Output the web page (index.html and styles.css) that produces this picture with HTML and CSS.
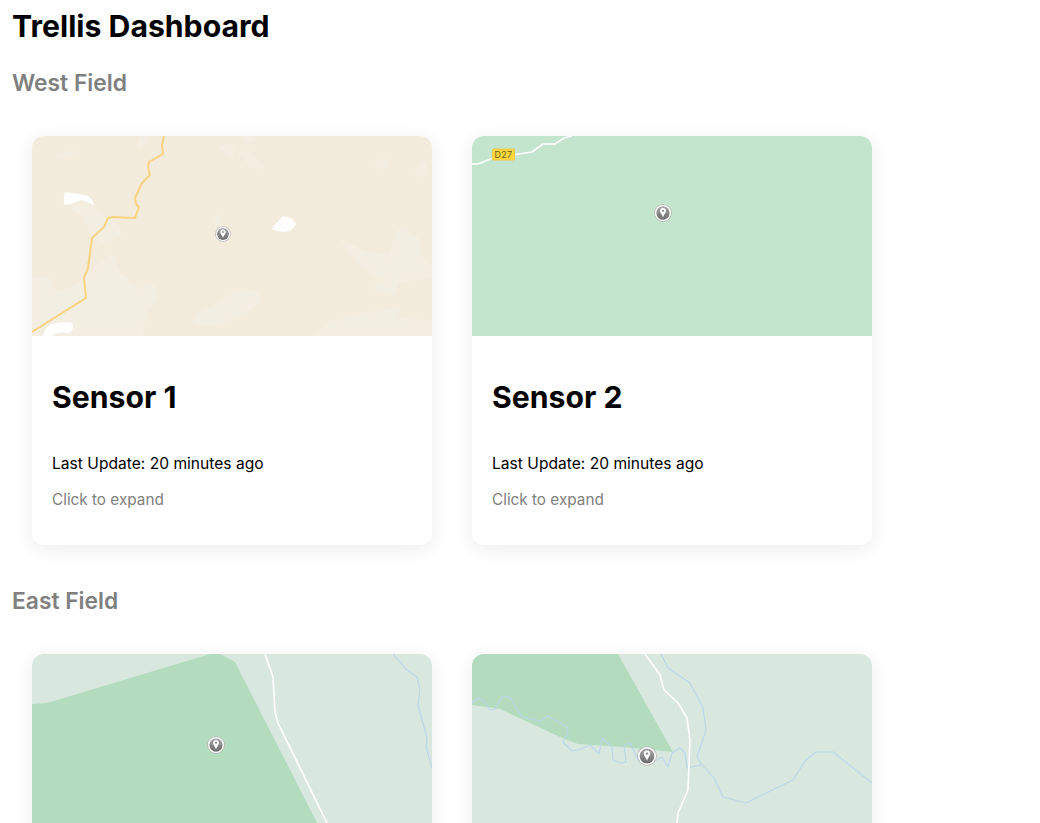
FILE: index.html
```html
<!DOCTYPE html>
<html lang="en">
<head>
  <meta charset="UTF-8" />
  <meta name="viewport" content="width=device-width, initial-scale=1.0"/>
  <title>Trellis Dashboard</title>
  <link rel="stylesheet" href="styles.css">
</head>
<body>
  <!-- shared map pin -->
  <svg class="defs" width="0" height="0" aria-hidden="true">
    <defs>
      <linearGradient id="pin-fill" x1="0" y1="0" x2="0" y2="1">
        <stop offset="0" stop-color="#a8a8a8"/>
        <stop offset="1" stop-color="#6b6b6b"/>
      </linearGradient>
      <symbol id="pin" viewBox="0 0 20 20">
        <circle cx="10" cy="10" r="9.8" fill="#b5b5b5"/>
        <circle cx="10" cy="10" r="9" fill="#fff"/>
        <circle cx="10" cy="10" r="7.4" fill="url(#pin-fill)"/>
        <path d="M10 4.4a3.3 3.3 0 0 0-3.3 3.3c0 2.3 2.5 3.6 3.3 7.3c.8-3.7 3.3-5 3.3-7.3A3.3 3.3 0 0 0 10 4.4z" fill="#fff"/>
        <circle cx="10" cy="7.6" r="1.2" fill="#8a8a8a"/>
      </symbol>
    </defs>
  </svg>

  <h1>Trellis Dashboard</h1>

  <h2 class="field-title">West Field</h2>
  <div class="card-grid">
    <div class="card">
      <svg class="map" viewBox="0 0 400 200">
        <rect width="400" height="200" fill="#f3ecdd"/>
        <g class="patches">
          <path d="M0 142L18 141L21 154L35 154L51 144L65 129L80 117L88 136L105 152L123 147L128 161L115 176L110 200L0 200z"/>
          <path d="M161 186L165 177L188 166L201 156L226 154L228 164L215 177L195 186L175 191z"/>
          <path d="M305 101L335 116L358 119L363 96L371 92L388 104L390 122L400 131L400 142L366 146L363 159L338 152L355 144L340 138L325 125z"/>
          <path d="M281 200L298 186L338 176L370 171L365 182L400 184L400 200z"/>
          <path d="M33 70L50 79L60 101L71 108L90 99L88 91L68 77L60 69z"/>
          <path d="M185 9L201 9L201 24L195 18z"/>
          <path d="M206 16L218 14L235 34L218 31z"/>
          <path d="M340 26L355 22L356 32L348 33z"/>
          <path d="M381 36L393 25L396 29L391 44z"/>
          <path d="M23 19L45 13L47 17L26 23z"/>
          <path d="M105 9L108 1L118 1L111 12z"/>
          <path d="M210 0L228 2L213 7z"/>
          <path d="M183 79L190 79L188 92L183 92z"/>
        </g>
        <g class="lakes">
          <path d="M33 56Q31 62 32 69Q40 68 50 64Q56 67 62 69Q61 62 53 59z"/>
          <path d="M251 80Q262 82 264 88Q262 94 253 96Q245 96 240 93Q243 88 251 80z"/>
          <path d="M11 200Q14 191 19 188Q30 186 38 186Q43 189 40 194Q38 198 34 197Q26 195 20 200z"/>
        </g>
        <polyline class="road-main" points="132,0 130,9 131,18 117,26 116,31 118,39 110,47 103,62 104,68 107,71 103,82 81,81 76,82 72,91 60,102 56,132 52,142 54,162 0,196"/>
        <use href="#pin" x="183" y="90" width="16" height="16"/>
      </svg>
      <div class="card-body">
        <h3>Sensor 1</h3>
        <p>Last Update: 20 minutes ago</p>
        <p class="hint">Click to expand</p>
      </div>
    </div>

    <div class="card">
      <svg class="map" viewBox="0 0 400 200">
        <rect width="400" height="200" fill="#c4e5cd"/>
        <polyline class="road" points="0,28 6,28 21,22 60,16 71,8 83,8 92,2 100,0"/>
        <rect x="20.5" y="13" width="22" height="11" rx="1" fill="#ffd93f" stroke="#f2c84b"/>
        <text class="shield" x="31.5" y="21.5">D27</text>
        <use href="#pin" x="182" y="68" width="18" height="18"/>
      </svg>
      <div class="card-body">
        <h3>Sensor 2</h3>
        <p>Last Update: 20 minutes ago</p>
        <p class="hint">Click to expand</p>
      </div>
    </div>
  </div>

  <h2 class="field-title">East Field</h2>
  <div class="card-grid">
    <div class="card">
      <svg class="map" viewBox="0 0 400 200">
        <rect width="400" height="200" fill="#d9e8df"/>
        <path d="M0 50L15 49L178 0L188 0L203 8L301 200L0 200z" fill="#b3dcbf"/>
        <polyline class="road" points="233,0 241,23 243,58 246,69 295,169 310,200"/>
        <polyline class="river" points="361,0 375,16 385,23 388,36 386,51 395,84 394,93 400,114"/>
        <use href="#pin" x="175" y="82" width="18" height="18"/>
      </svg>
    </div>

    <div class="card">
      <svg class="map" viewBox="0 0 400 200">
        <rect width="400" height="200" fill="#d9e8df"/>
        <path d="M0 0L146 0L201 98L151 93L106 90L88 83L28 55L0 51z" fill="#b3dcbf"/>
        <polyline class="river" points="189,0 196,14 218,29 231,54 234,76 225,103 230,111 242,124 251,143 274,149 321,126 333,107 344,98 361,98 400,129"/>
        <polyline class="river" points="0,49 6,44 11,46 18,56 23,55 31,42 38,43 50,63 68,67 76,62 95,73 96,78 91,88 100,97 106,96 118,91 127,100 130,84 140,93 141,106 148,109 154,108 152,91 158,89 163,99 166,106 185,106 190,103 196,113 200,99 208,94 213,99 215,114 229,111"/>
        <polyline class="road" points="173,0 188,21 192,36 206,49 215,64 218,86 216,136 206,159 205,169 205,200"/>
        <use href="#pin" x="165" y="92" width="20" height="20"/>
      </svg>
    </div>
  </div>
</body>
</html>
```

FILE: styles.css
```css
body {
  font-family: Inter, "Liberation Sans", sans-serif;
  background: #fff;
  color: #000;
  margin: 0;
  padding: 8px 12px;
}
.defs {
  position: absolute;
}
h1 {
  font-size: 30.2px;
  line-height: 36px;
  font-weight: 700;
  margin: 0 0 24px;
}
.field-title {
  font-size: 22.8px;
  line-height: 29px;
  font-weight: 600;
  color: #808080;
  margin: 0;
}
.card-grid {
  display: flex;
  gap: 40px;
  padding: 39px 20px 41px;
}
.card {
  width: 400px;
  background: #fff;
  border-radius: 12px;
  overflow: hidden;
  box-shadow: 0 4px 20px rgba(0,0,0,0.08);
}
.map {
  display: block;
  width: 400px;
  height: 200px;
}
.patches {
  fill: #f3eee2;
  filter: blur(0.8px);
}
.lakes {
  fill: #fff;
  filter: blur(0.3px);
}
.road-main {
  fill: none;
  stroke: #fbd27f;
  stroke-width: 2;
  stroke-linejoin: round;
}
.road {
  fill: none;
  stroke: #fff;
  stroke-width: 1.6;
  stroke-linejoin: round;
}
.river {
  fill: none;
  stroke: #b9d6ea;
  stroke-width: 1.1;
  stroke-linejoin: round;
}
.shield {
  font-size: 9px;
  letter-spacing: 0.3px;
  fill: #6b5a1a;
  text-anchor: middle;
}
.card-body {
  padding: 43px 20px 20px;
}
.card-body h3 {
  font-size: 30.2px;
  line-height: 36px;
  font-weight: 700;
  margin: 0 0 39px;
}
.card-body p {
  font-size: 15.6px;
  line-height: 19px;
  margin: 0 0 17px;
}
.card-body .hint {
  font-size: 15.3px;
  color: #808080;
  margin-bottom: 16px;
}
```
